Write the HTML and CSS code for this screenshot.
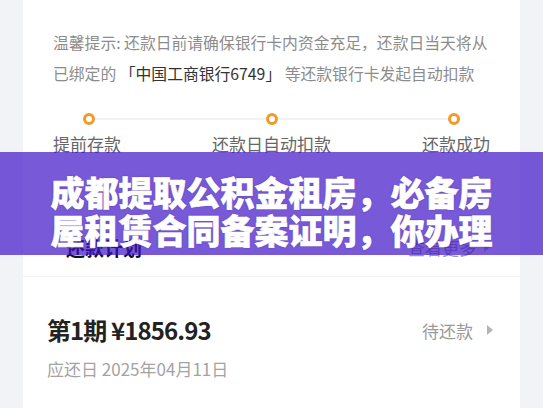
FILE: index.html
```html
<!DOCTYPE html>
<html lang="zh-CN">
<head>
    <meta charset="UTF-8">
    <meta name="viewport" content="width=device-width, initial-scale=1.0">
    <title>还款计划</title>
    <link rel="stylesheet" href="styles.css">
</head>
<body>
    <div class="page">
        <div class="card plan-card">
            <p class="hint">
                <span class="hint-line">温馨提示: 还款日前请确保银行卡内资金充足，还款日当天将从</span>
                <span class="hint-line">已绑定的 <span class="bank">「中国工商银行6749」</span> 等还款银行卡发起自动扣款</span>
            </p>
            <div class="dots">
                <span class="dot"></span>
                <span class="track"></span>
                <span class="dot"></span>
                <span class="track"></span>
                <span class="dot"></span>
            </div>
            <div class="steps">
                <span>提前存款</span>
                <span>还款日自动扣款</span>
                <span>还款成功</span>
            </div>
            <div class="plan-head">
                <span class="plan-title">还款计划</span>
                <span class="plan-more">查看更多 <i class="arrow"></i></span>
            </div>
        </div>

        <div class="card term-card">
            <div class="term-row">
                <span class="term-amount">第1期 ¥1856.93</span>
                <span class="term-status">待还款 <i class="arrow"></i></span>
            </div>
            <div class="term-date">应还日 2025年04月11日</div>
        </div>
    </div>

    <div class="banner">成都提取公积金租房，必备房<br>屋租赁合同备案证明，你办理</div>
</body>
</html>
```

FILE: styles.css
```css
body {
    margin: 0;
    padding: 0;
    background-color: #f2f3f7;
    font-family: "Noto Sans CJK SC", "Noto Sans", sans-serif;
    color: #222;
    height: 408px;
    overflow: hidden;
}
.page {
    padding: 0 23px;
}
.card {
    background-color: #fff;
}
.plan-card {
    padding: 27px 30px 16px;
    margin-bottom: 1px;
}
.hint {
    margin: 0;
    font-size: 15.8px;
    line-height: 31px;
    color: #8c8c8c;
}
.hint-line {
    display: block;
    white-space: nowrap;
}
.bank {
    color: #333;
}
.dots {
    display: flex;
    align-items: center;
    padding: 0 30px;
    margin-top: 24px;
}
.dot {
    width: 6px;
    height: 6px;
    border: 3px solid #f19a26;
    border-radius: 50%;
    flex-shrink: 0;
}
.track {
    flex: 1;
    height: 2px;
    background-color: #f2f2f2;
}
.steps {
    display: flex;
    justify-content: space-between;
    margin-top: 7px;
    font-size: 17px;
    line-height: 24px;
    color: #666;
}
.plan-head {
    display: flex;
    justify-content: space-between;
    align-items: center;
    margin-top: 78px;
    padding-left: 13px;
    height: 26px;
}
.plan-title {
    font-size: 19px;
    font-weight: bold;
    color: #111;
}
.plan-more {
    font-size: 17px;
    color: #999;
    display: flex;
    align-items: center;
    gap: 8px;
}
.arrow {
    display: inline-block;
    width: 0;
    height: 0;
    border-top: 5px solid transparent;
    border-bottom: 5px solid transparent;
    border-left: 6px solid #b5b5b5;
}
.term-card {
    padding: 36px 27px 60px 24px;
}
.term-row {
    display: flex;
    justify-content: space-between;
    align-items: center;
}
.term-amount {
    font-size: 24px;
    line-height: 34px;
    font-weight: bold;
    letter-spacing: -0.9px;
    color: #222;
}
.term-status {
    font-size: 17px;
    color: #9a9a9a;
    display: flex;
    align-items: center;
    gap: 14px;
}
.term-date {
    margin-top: 10px;
    font-size: 17px;
    line-height: 24px;
    color: #a3a3a3;
}
/* overlay title bar, see-through so the row under it shows faintly */
.banner {
    position: absolute;
    top: 152px;
    left: 0;
    right: 0;
    height: 103px;
    box-sizing: border-box;
    padding-top: 21px;
    background-color: rgba(62, 18, 199, 0.7);
    color: #fff;
    font-size: 34px;
    line-height: 38px;
    font-weight: 900;
    text-align: center;
    -webkit-text-stroke: 0.6px #fff;
    text-shadow: 0 0 2px rgba(40, 20, 90, 0.5);
}
```
